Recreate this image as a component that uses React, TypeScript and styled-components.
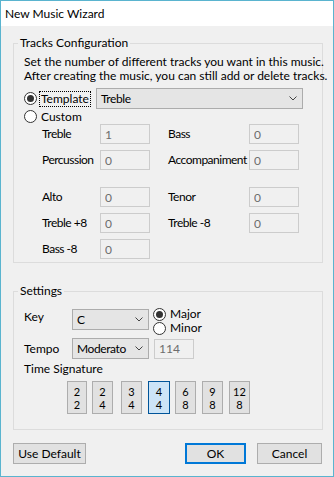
import React from 'react';
import styled, { createGlobalStyle } from 'styled-components';

const Global = createGlobalStyle`
  html, body { margin: 0; padding: 0; background: #ffffff; }
  body { font-family: Lato, "Segoe UI", sans-serif; font-size: 12px; color: #000; }
  * { box-sizing: border-box; }
`;

const Window = styled.div`
  width: 334px;
  height: 477px;
  border: 1px solid #5ab4cf;
  background: #f0f0f0;
  display: flex;
  flex-direction: column;
  overflow: hidden;
`;

const TitleBar = styled.div`
  height: 25px;
  flex: none;
  background: #ffffff;
  display: flex;
  align-items: center;
  padding-left: 4px;
`;

const Body = styled.div`
  flex: 1;
  display: flex;
  flex-direction: column;
  padding: 0 10px 0 12px;
`;

const Group = styled.fieldset<{ $mt: number }>`
  margin: ${(p) => p.$mt}px 0 0 0;
  padding: 0;
  min-width: 0;
  border: 1px solid #dcdcdc;
`;

const Legend = styled.legend`
  margin-left: 4px;
  padding: 0 2px;
  line-height: 16px;
`;

const GroupBody = styled.div<{ $pt: number; $pb: number }>`
  padding: ${(p) => p.$pt}px 10px ${(p) => p.$pb}px 10px;
  display: flex;
  flex-direction: column;
`;

const Desc = styled.p`
  margin: 0;
  line-height: 14px;
  white-space: nowrap;
`;

const Row = styled.div<{ $mt?: number; $h?: number }>`
  display: flex;
  align-items: center;
  margin-top: ${(p) => p.$mt ?? 0}px;
  height: ${(p) => (p.$h ? `${p.$h}px` : 'auto')};
`;

const RadioLabel = styled.label<{ $w?: number; $h?: number }>`
  display: flex;
  align-items: center;
  gap: 2px;
  width: ${(p) => (p.$w ? `${p.$w}px` : 'auto')};
  height: ${(p) => (p.$h ? `${p.$h}px` : 'auto')};
  flex: none;
`;

const RadioCircle = styled.span<{ $checked?: boolean }>`
  width: 13px;
  height: 13px;
  border-radius: 50%;
  border: 1px solid #333333;
  background: #ffffff;
  display: flex;
  align-items: center;
  justify-content: center;
  flex: none;
  &::after {
    content: '';
    width: 7px;
    height: 7px;
    border-radius: 50%;
    background: #333333;
    display: ${(p) => (p.$checked ? 'block' : 'none')};
  }
`;

const RadioText = styled.span<{ $focused?: boolean }>`
  padding: 0 1px;
  line-height: 14px;
  border: 1px ${(p) => (p.$focused ? 'dotted #000' : 'solid transparent')};
`;

const Combo = styled.div<{ $w: number }>`
  width: ${(p) => p.$w}px;
  height: 21px;
  flex: none;
  display: flex;
  align-items: center;
  justify-content: space-between;
  padding: 0 5px 0 4px;
  background: #e5e5e5;
  border: 1px solid #acacac;
`;

const ComboText = styled.span`
  letter-spacing: -0.4px;
  white-space: nowrap;
`;

const FieldGrid = styled.div<{ $mt: number }>`
  display: grid;
  grid-template-columns: 58px 68px 81px 50px;
  grid-auto-rows: 20px;
  row-gap: 6px;
  margin: ${(p) => p.$mt}px 0 0 18px;
`;

const FieldLabel = styled.span`
  align-self: center;
  line-height: 16px;
  white-space: nowrap;
  letter-spacing: -0.5px;
`;

const TextBox = styled.input<{ $w: number; $ml?: number }>`
  width: ${(p) => p.$w}px;
  height: 20px;
  margin: 0 0 0 ${(p) => p.$ml ?? 0}px;
  padding: 0 0 0 4px;
  border: 1px solid #cccccc;
  background: #f0f0f0;
  color: #6d6d6d;
  font: inherit;
  outline: none;
`;

const SideLabel = styled.span`
  width: 48px;
  flex: none;
  line-height: 20px;
`;

const RadioColumn = styled.div`
  display: flex;
  flex-direction: column;
  margin-left: 4px;
`;

const TopRow = styled.div<{ $mt?: number }>`
  display: flex;
  align-items: flex-start;
  margin-top: ${(p) => p.$mt ?? 0}px;
`;

const ComboWrap = styled.div<{ $mt: number }>`
  margin-top: ${(p) => p.$mt}px;
`;

const PlainLabel = styled.div<{ $mt: number }>`
  margin-top: ${(p) => p.$mt}px;
  line-height: 16px;
`;

const SigRow = styled.div`
  display: flex;
  margin-top: 4px;
  padding-left: 43px;
`;

const SigButton = styled.button<{ $w: number; $ml: number; $active?: boolean }>`
  width: ${(p) => p.$w}px;
  height: 33px;
  margin: 0 0 0 ${(p) => p.$ml}px;
  padding: 0;
  display: flex;
  flex-direction: column;
  align-items: center;
  justify-content: center;
  font: inherit;
  font-size: 11px;
  color: #000;
  background: ${(p) => (p.$active ? '#cce4f7' : '#e1e1e1')};
  border: 1px solid ${(p) => (p.$active ? '#005499' : '#adadad')};
`;

const SigDigit = styled.span`
  display: block;
  height: 13px;
  line-height: 13px;
`;

const Footer = styled.div`
  display: flex;
  margin-top: 13px;
`;

const PushButton = styled.button<{ $w: number; $ml?: number; $default?: boolean }>`
  width: ${(p) => p.$w}px;
  height: 21px;
  margin: 0 0 0 ${(p) => p.$ml ?? 0}px;
  padding: 0;
  font: inherit;
  color: #000;
  background: #e1e1e1;
  border: ${(p) => (p.$default ? '2px solid #0078d7' : '1px solid #adadad')};
`;

const Chevron = () => (
  <svg width="8" height="5" viewBox="0 0 8 5">
    <polyline points="0.5,0.5 4,4 7.5,0.5" fill="none" stroke="#444" strokeWidth="1" />
  </svg>
);

const firstFields: [string, string, string, string][] = [
  ['Treble', '1', 'Bass', '0'],
  ['Percussion', '0', 'Accompaniment', '0'],
];
const secondFields: [string, string, string | null, string | null][] = [
  ['Alto', '0', 'Tenor', '0'],
  ['Treble +8', '0', 'Treble -8', '0'],
  ['Bass -8', '0', null, null],
];

const sigs = [
  { t: '2', b: '2', w: 20, ml: 0 },
  { t: '2', b: '4', w: 21, ml: 5 },
  { t: '3', b: '4', w: 21, ml: 8 },
  { t: '4', b: '4', w: 22, ml: 6, active: true },
  { t: '6', b: '8', w: 21, ml: 5 },
  { t: '9', b: '8', w: 21, ml: 6 },
  { t: '12', b: '8', w: 21, ml: 6 },
];

export default function App() {
  return (
    <>
      <Global />
      <Window>
        <TitleBar>New Music Wizard</TitleBar>
        <Body>
          <Group $mt={9}>
            <Legend>Tracks Configuration</Legend>
            <GroupBody $pt={4} $pb={3}>
              <Desc>
                Set the number of different tracks you want in this music.
                <br />
                After creating the music, you can still add or delete tracks.
              </Desc>
              <Row $mt={5} $h={21}>
                <RadioLabel $w={72}>
                  <RadioCircle $checked />
                  <RadioText $focused>Template</RadioText>
                </RadioLabel>
                <Combo $w={207}>
                  <ComboText>Treble</ComboText>
                  <Chevron />
                </Combo>
              </Row>
              <Row $h={15}>
                <RadioLabel>
                  <RadioCircle />
                  <RadioText>Custom</RadioText>
                </RadioLabel>
              </Row>
              <FieldGrid $mt={0}>
                {firstFields.map(([a, av, b, bv]) => (
                  <React.Fragment key={a}>
                    <FieldLabel>{a}</FieldLabel>
                    <TextBox $w={50} readOnly value={av} />
                    <FieldLabel>{b}</FieldLabel>
                    <TextBox $w={50} readOnly value={bv} />
                  </React.Fragment>
                ))}
              </FieldGrid>
              <FieldGrid $mt={17}>
                {secondFields.map(([a, av, b, bv]) => (
                  <React.Fragment key={a}>
                    <FieldLabel>{a}</FieldLabel>
                    <TextBox $w={50} readOnly value={av} />
                    {b !== null && <FieldLabel>{b}</FieldLabel>}
                    {bv !== null && <TextBox $w={50} readOnly value={bv} />}
                  </React.Fragment>
                ))}
              </FieldGrid>
            </GroupBody>
          </Group>

          <Group $mt={20}>
            <Legend>Settings</Legend>
            <GroupBody $pt={8} $pb={15}>
              <TopRow>
                <SideLabel>Key</SideLabel>
                <ComboWrap $mt={2}>
                  <Combo $w={77}>
                    <ComboText>C</ComboText>
                    <Chevron />
                  </Combo>
                </ComboWrap>
                <RadioColumn>
                  <RadioLabel $h={14}>
                    <RadioCircle $checked />
                    <RadioText>Major</RadioText>
                  </RadioLabel>
                  <RadioLabel $h={14}>
                    <RadioCircle />
                    <RadioText>Minor</RadioText>
                  </RadioLabel>
                </RadioColumn>
              </TopRow>
              <Row $mt={3}>
                <SideLabel>Tempo</SideLabel>
                <Combo $w={77}>
                  <ComboText>Moderato</ComboText>
                  <Chevron />
                </Combo>
                <TextBox $w={40} $ml={5} readOnly value="114" />
              </Row>
              <PlainLabel $mt={2}>Time Signature</PlainLabel>
              <SigRow>
                {sigs.map((s) => (
                  <SigButton key={s.t + s.b} $w={s.w} $ml={s.ml} $active={s.active}>
                    <SigDigit>{s.t}</SigDigit>
                    <SigDigit>{s.b}</SigDigit>
                  </SigButton>
                ))}
              </SigRow>
            </GroupBody>
          </Group>

          <Footer>
            <PushButton $w={73}>Use Default</PushButton>
            <PushButton $w={61} $ml={99} $default>
              OK
            </PushButton>
            <PushButton $w={65} $ml={11}>
              Cancel
            </PushButton>
          </Footer>
        </Body>
      </Window>
    </>
  );
}
